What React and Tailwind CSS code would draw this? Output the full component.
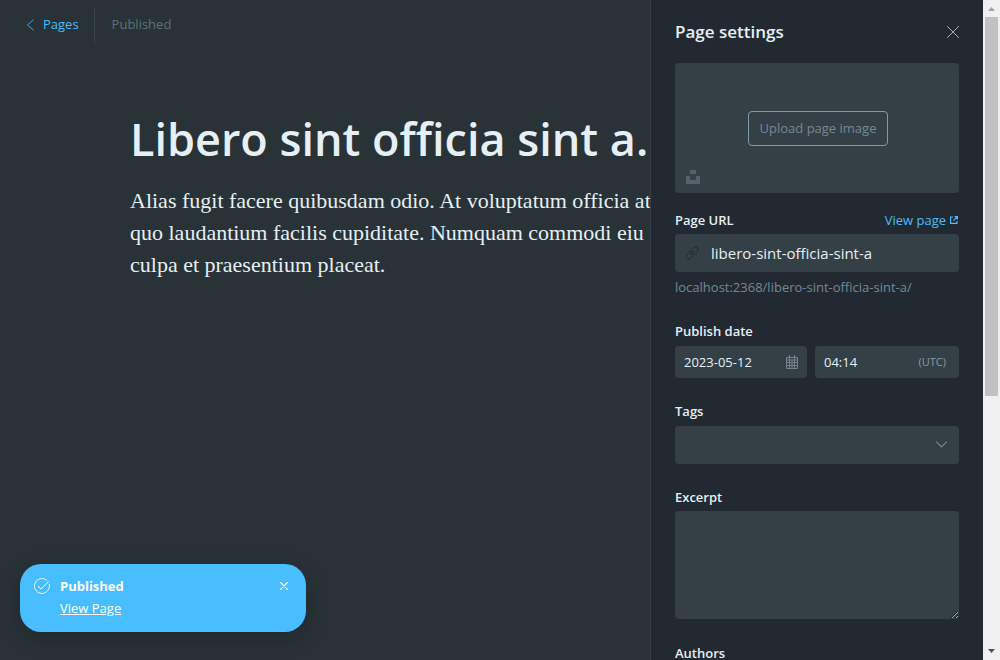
import React from "react";

const field = "block w-full rounded-[4px] bg-[#343f46] text-[#e5eff5] outline-none";
const labelText = "text-[13px] leading-5 font-semibold text-[#e5eff5]";

function Toast() {
  return (
    <div className="absolute bottom-7 left-5 flex h-[68px] w-[286px] items-start rounded-[21px] bg-[#48bdff] px-[14px] pt-3 text-[13px] text-white shadow-[0_6px_24px_rgba(0,0,0,0.2)]">
      <svg className="mt-[2px] h-4 w-4 shrink-0" viewBox="0 0 16 16" fill="none" stroke="currentColor" strokeWidth="1" strokeLinecap="round" strokeLinejoin="round" opacity="0.9">
        <path d="M15.3 6.3A7.5 7.5 0 1 1 12.8 2.200" />
        <path d="M4.200 8.200l2.900 2.900 7.300-7.400" />
      </svg>
      <div className="ml-[10px] flex flex-1 flex-col">
        <span className="-mt-px leading-[22px] font-bold">Published</span>
        <a href="#view" className="self-start leading-[22px] font-medium underline underline-offset-1">View Page</a>
      </div>
      <button type="button" aria-label="Dismiss" className="mt-[6px] mr-1">
        <svg className="h-2 w-2" viewBox="0 0 8 8" stroke="currentColor" strokeWidth="1.1" strokeLinecap="round">
          <path d="M0.5 0.5l7 7M7.5 0.5l-7 7" />
        </svg>
      </button>
    </div>
  );
}

function Editor() {
  return (
    <main className="relative min-w-0 flex-1 overflow-hidden">
      <header className="flex h-[50px] items-center pl-[26px] text-[13px]">
        <a href="#pages" className="flex items-center gap-2 text-[#48bdff]">
          <svg className="h-3 w-[9px]" viewBox="0 0 9 12" fill="none" stroke="currentColor" strokeWidth="0.8" strokeLinecap="round" strokeLinejoin="round">
            <path d="M7.500 0.800L1.500 6l6 5.200" />
          </svg>
          Pages
        </a>
        <span className="ml-[15px] h-9 w-px bg-[#3a464d]" />
        <span className="ml-[17px] text-[#5f7179]">Published</span>
      </header>
      <article className="pt-[59px] pl-[130px] whitespace-nowrap text-[#e5eff5]">
        <h1 className="text-[45px] leading-[60px] font-semibold">Libero sint officia sint a.</h1>
        <p className="mt-4 font-['Liberation_Serif',serif] text-[22px] leading-8">
          Alias fugit facere quibusdam odio. At voluptatum officia at
          <br />
          quo laudantium facilis cupiditate. Numquam commodi eiu
          <br />
          culpa et praesentium placeat.
        </p>
      </article>
      <Toast />
    </main>
  );
}

function Settings() {
  return (
    <aside className="w-[333px] shrink-0 overflow-hidden border-l border-[#343f46] bg-[#222930] px-6">
      <div className="flex h-[63px] items-center justify-between">
        <h2 className="text-[17px] font-semibold text-[#e5eff5]">Page settings</h2>
        <button type="button" aria-label="Close" className="text-[#b3c1c9]">
          <svg className="h-3 w-3" viewBox="0 0 12 12" stroke="currentColor" strokeWidth="0.9" strokeLinecap="round">
            <path d="M0.4 0.4l11.2 11.2M11.6 0.4L0.4 11.6" />
          </svg>
        </button>
      </div>

      <div className="relative flex h-[130px] items-center justify-center rounded-[4px] bg-[#343f46]">
        <button type="button" className="ml-[2px] h-[35px] w-[140px] rounded-[4px] border border-[#7c9cad] pt-[2px] text-[13px] text-[#738a94]">Upload page image</button>
        <svg className="absolute bottom-[9px] left-[11px] h-[14px] w-[14px]" viewBox="0 0 14 14" fill="#56626a" shapeRendering="crispEdges">
          <path d="M4 0h6v4H4zM0 6h4v4h6V6h4v8H0z" />
        </svg>
      </div>

      <div className="mt-[17px] mb-1 flex items-center justify-between">
        <label htmlFor="url" className={labelText}>Page URL</label>
        <a href="#view" className="flex items-center gap-1 pr-px text-[13px] leading-5 text-[#48bdff]">
          View page
          <svg className="h-2 w-2" viewBox="0 0 8 8" fill="none" stroke="currentColor" strokeWidth="1.2">
            <path d="M3.2 1H0.6v6.4H7V5" />
            <path d="M4.6 0.6h2.8v2.8M7.2 0.8L3.4 4.6" />
          </svg>
        </a>
      </div>
      <div className="relative">
        <input id="url" defaultValue="libero-sint-officia-sint-a" className={field + " h-[38px] pl-9 pr-3 text-[15px]"} />
        <svg className="absolute top-3 left-[10px] h-[14px] w-[14px]" viewBox="0 0 24 24" fill="none" stroke="#20282d" strokeWidth="1.7" strokeLinecap="round">
          <path d="M9 15l6-6" />
          <path d="M10.5 7l4.2-4.2a4.6 4.6 0 0 1 6.5 6.5l-4 4a4.6 4.6 0 0 1-6.5 0" />
          <path d="M13.5 17l-4.2 4.2a4.6 4.6 0 0 1-6.500-6.500l4-4a4.6 4.6 0 0 1 6.500 0" />
        </svg>
      </div>
      <p className="mt-[5px] text-[13px] leading-5 text-[#738a94]">localhost:2368/libero-sint-officia-sint-a/</p>

      <label htmlFor="date" className={labelText + " mt-6 mb-[5px] block"}>Publish date</label>
      <div className="flex gap-2">
        <div className="relative w-[132px]">
          <input id="date" defaultValue="2023-05-12" className={field + " h-8 pl-[9px] text-[13px] font-medium"} />
          <svg className="absolute top-[9px] right-[9px] h-[14px] w-3" viewBox="0 0 12 14" fill="none" stroke="#75838b" strokeWidth="1">
            <path d="M0.5 2.5h11v11h-11zM0.5 5h11M0.5 7.5h11M0.5 10.5h11M3.5 0v13M6 5v8M8.5 0v13" />
          </svg>
        </div>
        <div className="relative flex-1">
          <input aria-label="Publish time" defaultValue="04:14" className={field + " h-8 pl-[9px] text-[13px] font-medium"} />
          <span className="absolute top-0 right-[13px] text-[11px] leading-8 text-[#8b9aa2]">(UTC)</span>
        </div>
      </div>

      <label htmlFor="tags" className={labelText + " mt-[23px] mb-[5px] block"}>Tags</label>
      <div className="relative">
        <select id="tags" className={field + " h-[38px] appearance-none px-3"} defaultValue="">
          <option value=""></option>
        </select>
        <svg className="pointer-events-none absolute top-[15px] right-3 h-[7px] w-[11px]" viewBox="0 0 11 7" fill="none" stroke="#738a94" strokeWidth="1.1" strokeLinecap="round" strokeLinejoin="round">
          <path d="M0.6 0.8l4.9 5 4.9-5" />
        </svg>
      </div>

      <label htmlFor="excerpt" className={labelText + " mt-[23px] mb-1 block"}>Excerpt</label>
      <textarea id="excerpt" className={field + " h-[108px] resize p-3 text-[15px]"} />

      <h3 className={labelText + " mt-6"}>Authors</h3>
    </aside>
  );
}

function ScrollBar() {
  return (
    <div aria-hidden="true" className="flex w-[17px] shrink-0 flex-col items-center bg-[#f0f0f0]">
      <svg className="h-[17px] w-[17px] shrink-0" viewBox="0 0 17 17" fill="#a3a3a3">
        <path d="M5 11h7L8.5 7z" />
      </svg>
      <div className="h-[379px] w-[13px] shrink-0 bg-[#c1c1c1]" />
      <svg className="mt-auto h-[17px] w-[17px] shrink-0" viewBox="0 0 17 17" fill="#505050">
        <path d="M5 6h7l-3.500 4z" />
      </svg>
    </div>
  );
}

export default function App() {
  return (
    <div className="flex h-screen overflow-hidden bg-[#283237] font-['Open_Sans',sans-serif]">
      <Editor />
      <Settings />
      <ScrollBar />
    </div>
  );
}
